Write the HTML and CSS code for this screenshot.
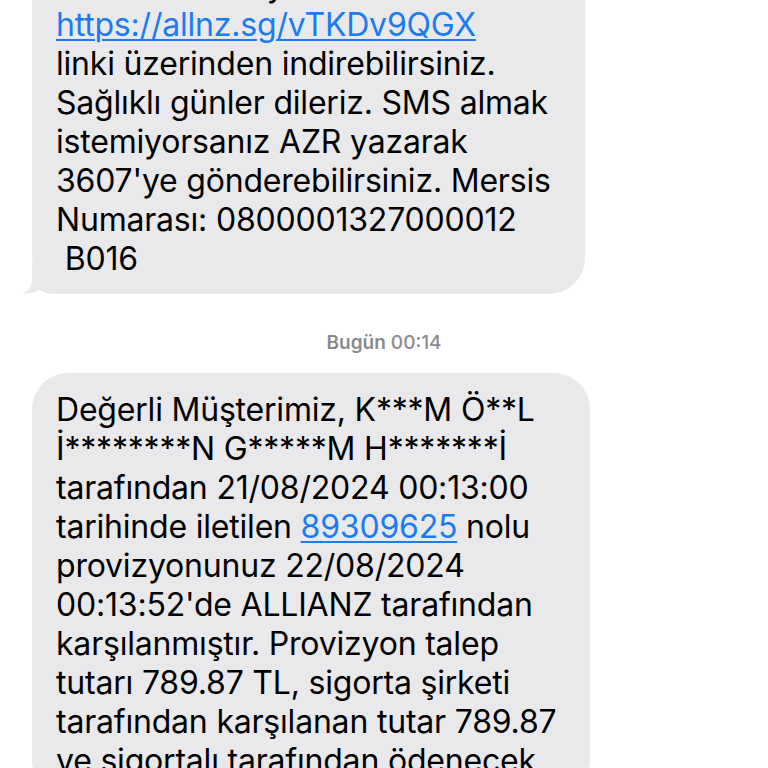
FILE: index.html
```html
<!DOCTYPE html>
<html lang="tr">
<head>
<meta charset="utf-8">
<link rel="stylesheet" href="styles.css">
</head>
<body>
<div class="thread">
  <div class="bubble bubble-first">
    <svg class="tail" width="70" height="30" viewBox="0 0 70 30"><path d="M12 0 L12 17 C12 23 8 27 2 29.5 C10 30 16 28 20 25.5 C24 28.5 28 30 36 30 L70 30 L70 0 Z" fill="#e9e9eb"/></svg>
    <p class="msg">Tüm evrakları yine de<br><a class="link" href="#">https://allnz.sg/vTKDv9QGX</a><br>linki üzerinden indirebilirsiniz.<br>Sağlıklı günler dileriz. SMS almak<br>istemiyorsanız AZR yazarak<br>3607'ye gönderebilirsiniz. Mersis<br>Numarası: 0800001327000012<br>&nbsp;B016</p>
  </div>
  <div class="stamp"><span class="stamp-day">Bugün</span> 00:14</div>
  <div class="bubble bubble-second">
    <p class="msg">Değerli Müşterimiz, K***M Ö**L<br>İ********N G*****M H*******İ<br>tarafından 21/08/2024 00:13:00<br>tarihinde iletilen <a class="link" href="#">89309625</a> nolu<br>provizyonunuz 22/08/2024<br>00:13:52'de ALLIANZ tarafından<br>karşılanmıştır. Provizyon talep<br>tutarı 789.87 TL, sigorta şirketi<br>tarafından karşılanan tutar 789.87<br>ve sigortalı tarafından ödenecek</p>
  </div>
</div>
</body>
</html>
```
FILE: styles.css
```css
html, body {
  margin: 0;
  padding: 0;
  background: #ffffff;
  height: 768px;
  overflow: hidden;
}
.thread {
  padding-left: 32px;
  display: flex;
  flex-direction: column;
  align-items: flex-start;
  font-family: Inter, "Noto Sans", sans-serif;
}
.bubble {
  position: relative;
  background: #e9e9eb;
  border-radius: 36px;
  padding: 17px 0 16px 24px;
  box-sizing: border-box;
}
.bubble-first {
  width: 553px;
  margin-top: -51px;
}
.bubble-second {
  width: 558px;
  margin-top: 18px;
  padding-top: 17px;
}
.msg {
  position: relative;
  z-index: 1;
  margin: 0;
  font-size: 32px;
  line-height: 39px;
  color: #000;
  white-space: nowrap;
  letter-spacing: -0.2px;
}
.link {
  color: #1b7cf2;
  text-decoration: underline;
  text-decoration-thickness: 1.5px;
  text-underline-offset: 3px;
}
.tail {
  position: absolute;
  left: -12px;
  bottom: 0;
}
.stamp {
  align-self: stretch;
  margin-left: -32px;
  text-align: center;
  margin-top: 37px;
  font-size: 19px;
  line-height: 24px;
  color: #8a8a8e;
  font-weight: 500;
}
.stamp-day {
  font-weight: 600;
}
```
